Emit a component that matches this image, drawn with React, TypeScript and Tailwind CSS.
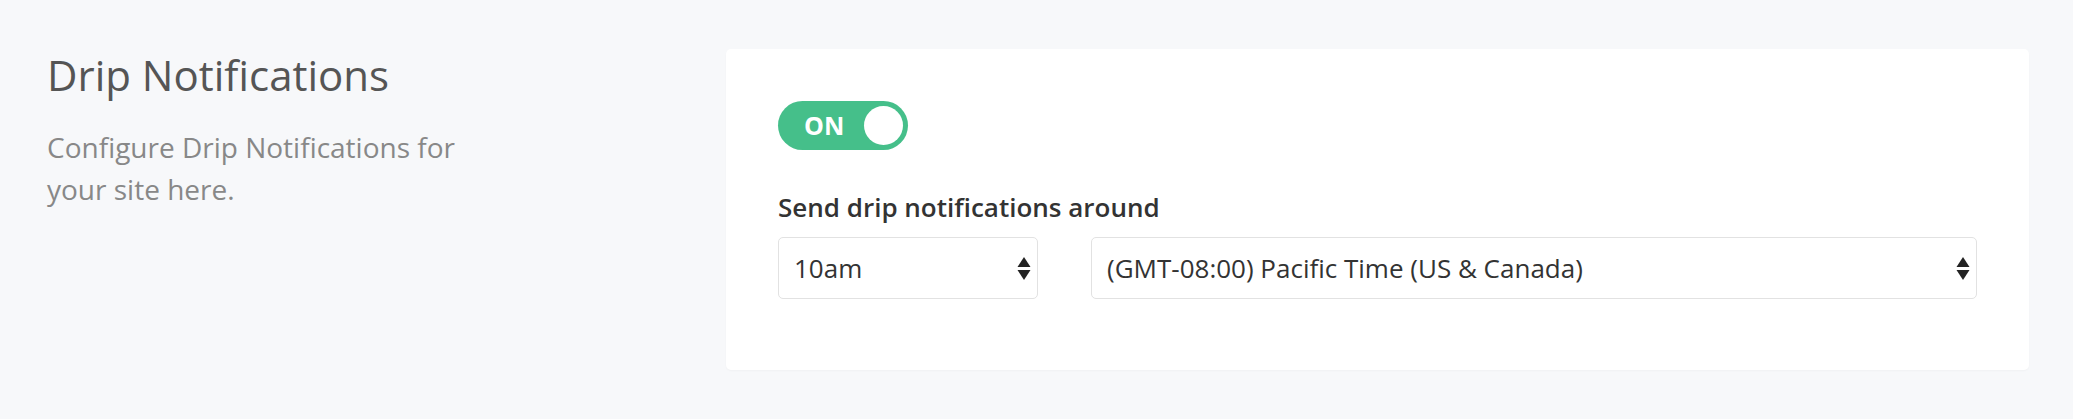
import { useState } from "react";

function Arrows() {
  return (
    <svg width="14" height="23" viewBox="0 0 14 23" className="shrink-0">
      <path d="M7 0 L13.5 10 L0.5 10 Z" fill="#222" />
      <path d="M0.5 13 L13.5 13 L7 23 Z" fill="#222" />
    </svg>
  );
}

function FakeSelect({ value, className }: { value: string; className: string }) {
  return (
    <div
      className={`h-[62px] flex items-center justify-between pl-[15px] pr-[6px] border border-[#e2e2e2] rounded-[5px] bg-white text-[26px] text-[#333] ${className}`}
    >
      <span className="leading-none">{value}</span>
      <Arrows />
    </div>
  );
}

export default function App() {
  const [on, setOn] = useState(true);

  return (
    <div className="min-h-[419px] bg-[#f7f8fa] flex pt-[49px] pl-[47px] pr-[44px] font-['Open_Sans',_sans-serif]">
      {/* Section intro */}
      <div className="w-[679px] shrink-0">
        <h2 className="mt-[2px] text-[42px] leading-[48px] text-[#555] font-normal">Drip Notifications</h2>
        <p className="mt-[27px] w-[440px] text-[28px] leading-[42px] text-[#888]">
          Configure Drip Notifications for your site here.
        </p>
      </div>

      {/* Settings card */}
      <div className="flex-1 h-[321px] bg-white rounded-[5px] shadow-[0_1px_2px_rgba(0,0,0,0.03)] pt-[52px] px-[52px]">
        <button
          onClick={() => setOn(!on)}
          className="w-[130px] h-[49px] rounded-full bg-[#45bf8a] flex items-center justify-between pl-[26px] pr-[5px]"
        >
          <span className="text-[25px] font-bold text-white leading-none">ON</span>
          <span className="w-[39px] h-[39px] rounded-full bg-white" />
        </button>

        <label className="block mt-[39px] text-[26px] leading-[36px] font-semibold text-[#333]">
          Send drip notifications around
        </label>

        <div className="mt-[12px] flex gap-[53px]">
          <FakeSelect value="10am" className="w-[260px]" />
          <FakeSelect value="(GMT-08:00) Pacific Time (US & Canada)" className="flex-1" />
        </div>
      </div>
    </div>
  );
}
